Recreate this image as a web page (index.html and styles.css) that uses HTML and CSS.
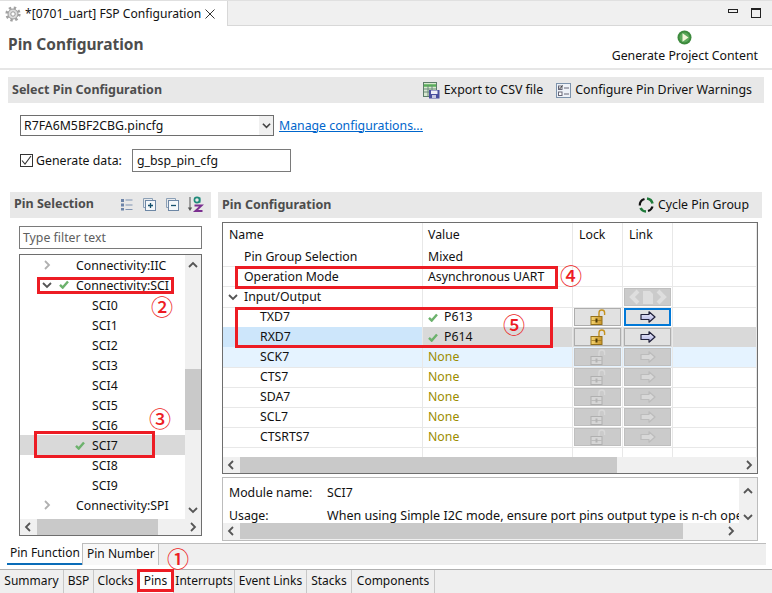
FILE: index.html
```html
<!DOCTYPE html>
<html lang="en">
<head>
<meta charset="utf-8">
<title>FSP Configuration</title>
<link rel="stylesheet" href="styles.css">
</head>
<body>
<svg class="defs" width="0" height="0" aria-hidden="true">
  <defs>
    <linearGradient id="gold" x1="0" y1="0" x2="1" y2="0"><stop offset="0" stop-color="#f6d774"/><stop offset="1" stop-color="#c9952a"/></linearGradient>
    <linearGradient id="lilac" x1="0" y1="0" x2="0" y2="1"><stop offset="0" stop-color="#eeeefa"/><stop offset="1" stop-color="#aeb0e2"/></linearGradient>
    <symbol id="lock" viewBox="0 0 16 16">
      <path d="M9 8V3.800a2.800 2.800 0 0 1 5.600 0V6" fill="none" stroke="var(--sh,#c6921f)" stroke-width="1.400"/>
      <rect x="1" y="7.500" width="11" height="8" fill="var(--lk,url(#gold))" stroke="var(--lkb,#94701a)"/>
      <path d="M1.500 11.500h10" stroke="var(--lkb,#94701a)" stroke-width=".7"/>
      <rect x="5.500" y="9.500" width="2" height="4" fill="var(--lkh,#4e3b08)"/>
    </symbol>
    <symbol id="arrow" viewBox="0 0 16 12">
      <path d="M1 3.500h8V.8L15 6l-6 5.200V8.500H1z" fill="var(--ar,url(#lilac))" stroke="var(--arb,#20203a)" stroke-width="1.200" stroke-linejoin="round"/>
    </symbol>
    <symbol id="tick" viewBox="0 0 10 9">
      <path d="M1 4.800 3.700 7.600 9 1.500" fill="none" stroke="#6cb26c" stroke-width="2.400"/>
    </symbol>
    <symbol id="chev-r" viewBox="0 0 10 10"><path d="M3 1l4 4-4 4" fill="none" stroke="currentColor" stroke-width="1.800"/></symbol>
    <symbol id="chev-l" viewBox="0 0 10 10"><path d="M7 1L3 5l4 4" fill="none" stroke="currentColor" stroke-width="1.800"/></symbol>
    <symbol id="chev-d" viewBox="0 0 10 10"><path d="M1 3l4 4 4-4" fill="none" stroke="currentColor" stroke-width="1.800"/></symbol>
    <symbol id="chev-u" viewBox="0 0 10 10"><path d="M1 7l4-4 4 4" fill="none" stroke="currentColor" stroke-width="1.800"/></symbol>
  </defs>
</svg>

<div class="app">
  <div class="tabbar">
    <div class="editor-tab">
      <svg class="gear" width="16" height="16" viewBox="0 0 16 16"><circle cx="8" cy="8" r="6.300" fill="none" stroke="#a2a2a2" stroke-width="2.600" stroke-dasharray="2.400 2.550"/><circle cx="8" cy="8" r="5" fill="#dcdcdc" stroke="#9a9a9a"/><circle cx="8" cy="8" r="2.200" fill="#fff" stroke="#9a9a9a"/></svg>
      <span class="tab-title">*[0701_uart] FSP Configuration</span>
      <svg class="close" width="10" height="10" viewBox="0 0 10 10"><path d="M.5.500l9 9M9.500.500l-9 9" stroke="#333" stroke-width="1"/></svg>
    </div>
    <div class="win-controls">
      <span class="win-min"></span>
      <span class="win-max"></span>
    </div>
  </div>

  <header class="page-head">
    <h1 class="page-title">Pin Configuration</h1>
    <div class="generate">
      <svg width="15" height="15" viewBox="0 0 15 15"><circle cx="7.500" cy="7.500" r="7" fill="#3d8a3d"/><circle cx="7.500" cy="7.500" r="5" fill="#5aa85a"/><path d="M5.500 3.200l6 4.300-6 4.300z" fill="#f2f6d8"/></svg>
      <span>Generate Project Content</span>
    </div>
  </header>

  <section class="select-section">
    <div class="bar select-bar">
      <h2 class="bar-title">Select Pin Configuration</h2>
      <div class="bar-actions">
        <span class="action">
          <svg width="17" height="17" viewBox="0 0 17 17"><rect x=".5" y=".5" width="13" height="14" fill="#d8e8d0" stroke="#5d7d6a"/><path d="M1 3.500h12" stroke="#58b058" stroke-width="2.500"/><path d="M1 7h12M1 10h12M5 3v11M9 3v11" stroke="#6a8a7a"/><rect x="6" y="8" width="10.500" height="8.500" fill="#4a4f9e"/><rect x="8" y="8.500" width="6.500" height="3.500" fill="#f0f0f8"/><rect x="9" y="13" width="4" height="3" fill="#c8c8e0"/></svg>
          Export to CSV file
        </span>
        <span class="action">
          <svg width="15" height="15" viewBox="0 0 15 15"><rect x=".5" y=".5" width="14" height="14" fill="#eef2f8" stroke="#7d93ac"/><rect x="2.500" y="3" width="3.500" height="3.500" fill="#fff" stroke="#667"/><path d="M3 4.500l1 1.200L6.500 2.500" fill="none" stroke="#333"/><rect x="2.500" y="9" width="3.500" height="3.500" fill="#fff" stroke="#667"/><path d="M8 5h5M8 11h5" stroke="#667"/></svg>
          Configure Pin Driver Warnings
        </span>
      </div>
    </div>
    <div class="combo-row">
      <div class="combo">
        <span class="combo-text">R7FA6M5BF2CBG.pincfg</span>
        <span class="combo-btn"><svg width="9" height="9"><use href="#chev-d"/></svg></span>
      </div>
      <a class="link" href="#">Manage configurations...</a>
    </div>
    <div class="gen-row">
      <span class="check"><svg width="11" height="11" viewBox="0 0 11 11"><path d="M1 5.500l3 3.500 6-8" fill="none" stroke="#333" stroke-width="1.100"/></svg></span>
      <label class="gen-label">Generate data:</label>
      <div class="text-input">g_bsp_pin_cfg</div>
    </div>
  </section>

  <div class="columns">
    <section class="left">
      <div class="bar left-bar">
        <h2 class="bar-title">Pin Selection</h2>
        <div class="tools">
          <svg width="13" height="13" viewBox="0 0 13 13"><path d="M1 1h3v3H1zM1 5.500h3v3H1zM1 10h3v2.500H1z" fill="#6d84a8"/><path d="M5.500 2h7M5.500 7h7M5.500 11.500h7" stroke="#7f93b2"/></svg>
          <svg width="13" height="13" viewBox="0 0 13 13"><path d="M.5.500h9v2M.5.500v9h2" fill="#e8eef4" stroke="#8ca0b6"/><rect x="2.500" y="2.500" width="10" height="10" fill="#f4f7fa" stroke="#6d87a5"/><path d="M5 7.500h5M7.500 5v5" stroke="#14506e" stroke-width="1.300"/></svg>
          <svg width="13" height="13" viewBox="0 0 13 13"><path d="M.5.500h9v2M.5.500v9h2" fill="#e8eef4" stroke="#8ca0b6"/><rect x="2.500" y="2.500" width="10" height="10" fill="#f4f7fa" stroke="#6d87a5"/><path d="M5 7.500h5" stroke="#14506e" stroke-width="1.300"/></svg>
          <span class="sort">
            <svg width="17" height="17" viewBox="0 0 17 17"><path d="M3 1v12" stroke="#555" stroke-width="1"/><path d="M.8 11.500L3 15l2.200-3.500z" fill="#555"/><circle cx="10" cy="4" r="2.600" fill="none" stroke="#1f8a7a" stroke-width="1.600"/><path d="M12.700 1.500v5.200" stroke="#1f8a7a" stroke-width="1.600"/><path d="M7.500 9.500h7l-6 5.500h7" fill="none" stroke="#7b2f90" stroke-width="2"/></svg>
          </span>
        </div>
      </div>
      <div class="filter">Type filter text</div>
      <div class="tree-box">
        <div class="tree-body">
          <ul class="tree">
            <li class="node"><svg class="twist twist-c" width="10" height="10"><use href="#chev-r"/></svg><span class="lbl">Connectivity:IIC</span></li>
            <li class="node"><svg class="twist twist-o" width="10" height="10"><use href="#chev-d"/></svg><svg class="tick" width="10" height="9"><use href="#tick"/></svg><span class="lbl">Connectivity:SCI</span></li>
            <li class="leaf"><span class="lbl">SCI0</span></li>
            <li class="leaf"><span class="lbl">SCI1</span></li>
            <li class="leaf"><span class="lbl">SCI2</span></li>
            <li class="leaf"><span class="lbl">SCI3</span></li>
            <li class="leaf"><span class="lbl">SCI4</span></li>
            <li class="leaf"><span class="lbl">SCI5</span></li>
            <li class="leaf"><span class="lbl">SCI6</span></li>
            <li class="leaf selected"><svg class="tick" width="10" height="9"><use href="#tick"/></svg><span class="lbl">SCI7</span></li>
            <li class="leaf"><span class="lbl">SCI8</span></li>
            <li class="leaf"><span class="lbl">SCI9</span></li>
            <li class="node"><svg class="twist twist-c" width="10" height="10"><use href="#chev-r"/></svg><span class="lbl">Connectivity:SPI</span></li>
          </ul>
          <div class="vscroll tree-v">
            <svg width="10" height="10"><use href="#chev-u"/></svg>
            <div class="v-track"><div class="v-thumb tree-thumb"></div></div>
            <svg width="10" height="10"><use href="#chev-d"/></svg>
          </div>
        </div>
        <div class="hscroll tree-h">
          <svg width="10" height="10"><use href="#chev-l"/></svg>
          <div class="h-track"><div class="h-thumb tree-hthumb"></div></div>
          <svg width="10" height="10"><use href="#chev-r"/></svg>
        </div>
      </div>
    </section>

    <section class="right">
      <div class="bar right-bar">
        <h2 class="bar-title">Pin Configuration</h2>
        <span class="action">
          <svg width="16" height="16" viewBox="0 0 16 16"><path d="M9 1.500a6.500 6.500 0 0 1 5.500 5" fill="none" stroke="#1f7a3a" stroke-width="2.600"/><path d="M14.500 9.500A6.500 6.500 0 0 1 10 14" fill="none" stroke="#111" stroke-width="2.200"/><path d="M8 14.500a6.500 6.500 0 0 1-5.500-3.500" fill="none" stroke="#1f7a3a" stroke-width="2.600"/><path d="M1.800 8.500A6.500 6.500 0 0 1 6.500 2" fill="none" stroke="#111" stroke-width="2.200"/></svg>
          Cycle Pin Group
        </span>
      </div>
      <div class="table-box">
        <div class="grid-table">
          <div class="tr head"><div class="td">Name</div><div class="td">Value</div><div class="td">Lock</div><div class="td">Link</div><div class="td"></div></div>

          <div class="tr low"><div class="td ind1">Pin Group Selection</div><div class="td">Mixed</div><div class="td"></div><div class="td"></div><div class="td"></div></div>
          <div class="tr low"><div class="td ind1">Operation Mode</div><div class="td">Asynchronous UART</div><div class="td"></div><div class="td"></div><div class="td"></div></div>
          <div class="tr"><div class="td tw"><svg class="twist-o" width="10" height="10"><use href="#chev-d"/></svg><span>Input/Output</span></div><div class="td"></div><div class="td"></div>
            <div class="td btn-cell"><span class="btn off multi"><svg width="40" height="16" viewBox="0 0 40 16"><path d="M10 2L4 8l6 6M30 2l6 6-6 6" fill="none" stroke="#dedede" stroke-width="4"/><path d="M15 2h7l3 3v10H15z" fill="#dedede"/></svg></span></div><div class="td"></div></div>

          <div class="tr"><div class="td ind2">TXD7</div><div class="td val"><svg width="10" height="9"><use href="#tick"/></svg><span>P613</span></div>
            <div class="td btn-cell"><span class="btn lock"><svg width="16" height="16"><use href="#lock"/></svg></span></div>
            <div class="td btn-cell"><span class="btn link-on focus"><svg width="16" height="12"><use href="#arrow"/></svg></span></div><div class="td"></div></div>

          <div class="tr sel"><div class="td ind2">RXD7</div><div class="td val"><svg width="10" height="9"><use href="#tick"/></svg><span>P614</span></div>
            <div class="td btn-cell"><span class="btn lock"><svg width="16" height="16"><use href="#lock"/></svg></span></div>
            <div class="td btn-cell"><span class="btn link-on"><svg width="16" height="12"><use href="#arrow"/></svg></span></div><div class="td"></div></div>

          <div class="tr hov"><div class="td ind2">SCK7</div><div class="td none">None</div>
            <div class="td btn-cell"><span class="btn off lock-off"><svg width="16" height="16"><use href="#lock"/></svg></span></div>
            <div class="td btn-cell"><span class="btn off arrow-off"><svg width="16" height="12"><use href="#arrow"/></svg></span></div><div class="td"></div></div>
          <div class="tr"><div class="td ind2">CTS7</div><div class="td none">None</div>
            <div class="td btn-cell"><span class="btn off lock-off"><svg width="16" height="16"><use href="#lock"/></svg></span></div>
            <div class="td btn-cell"><span class="btn off arrow-off"><svg width="16" height="12"><use href="#arrow"/></svg></span></div><div class="td"></div></div>
          <div class="tr"><div class="td ind2">SDA7</div><div class="td none">None</div>
            <div class="td btn-cell"><span class="btn off lock-off"><svg width="16" height="16"><use href="#lock"/></svg></span></div>
            <div class="td btn-cell"><span class="btn off arrow-off"><svg width="16" height="12"><use href="#arrow"/></svg></span></div><div class="td"></div></div>
          <div class="tr"><div class="td ind2">SCL7</div><div class="td none">None</div>
            <div class="td btn-cell"><span class="btn off lock-off"><svg width="16" height="16"><use href="#lock"/></svg></span></div>
            <div class="td btn-cell"><span class="btn off arrow-off"><svg width="16" height="12"><use href="#arrow"/></svg></span></div><div class="td"></div></div>
          <div class="tr"><div class="td ind2">CTSRTS7</div><div class="td none">None</div>
            <div class="td btn-cell"><span class="btn off lock-off"><svg width="16" height="16"><use href="#lock"/></svg></span></div>
            <div class="td btn-cell"><span class="btn off arrow-off"><svg width="16" height="12"><use href="#arrow"/></svg></span></div><div class="td"></div></div>
          <div class="tr stub"><div class="td"></div><div class="td"></div><div class="td"></div><div class="td"></div><div class="td"></div></div>
        </div>
        <div class="hscroll table-h">
          <svg width="10" height="10"><use href="#chev-l"/></svg>
          <div class="h-track"><div class="h-thumb table-thumb"></div></div>
          <svg width="10" height="10"><use href="#chev-r"/></svg>
        </div>
      </div>
      <div class="detail">
        <div class="detail-main">
          <div class="detail-text">
            <div class="detail-row first"><span class="dk">Module name:</span><span class="dv">SCI7</span></div>
            <div class="detail-row usage"><span class="dk">Usage:</span><span class="dv">When using Simple I2C mode, ensure port pins output type is n-ch open drain</span></div>
          </div>
          <div class="hscroll detail-h">
            <svg width="10" height="10"><use href="#chev-l"/></svg>
            <div class="h-track"><div class="h-thumb detail-thumb"></div></div>
            <svg width="10" height="10"><use href="#chev-r"/></svg>
          </div>
        </div>
        <div class="vscroll detail-v">
          <svg width="10" height="10"><use href="#chev-u"/></svg>
          <svg width="10" height="10"><use href="#chev-d"/></svg>
        </div>
      </div>
    </section>
  </div>

  <div class="sub-tabs">
    <div class="sub-tab current">Pin Function</div>
    <div class="sub-tab">Pin Number</div>
    <div class="sub-rest"></div>
  </div>

  <nav class="main-tabs">
    <span class="mt">Summary</span><span class="mt">BSP</span><span class="mt">Clocks</span><span class="mt active">Pins</span><span class="mt">Interrupts</span><span class="mt">Event Links</span><span class="mt">Stacks</span><span class="mt">Components</span>
  </nav>

  <div class="rbox rb1"></div>
  <div class="rbox rb2"></div>
  <div class="rbox rb3"></div>
  <div class="rbox rb4"></div>
  <div class="rbox rb5"></div>
  <span class="num n1">①</span>
  <span class="num n2">②</span>
  <span class="num n3">③</span>
  <span class="num n4">④</span>
  <span class="num n5">⑤</span>
</div>
</body>
</html>
```
FILE: styles.css
```css
* { box-sizing: border-box; }
html, body { margin: 0; padding: 0; background: #fff; }
body { font: 12.3px/20px "Noto Sans", "Open Sans", sans-serif; color: #111; }
h1, h2 { margin: 0; }
ul { list-style: none; margin: 0; padding: 0; }
svg { display: block; flex: none; }
.defs { position: absolute; }

.app { position: relative; width: 772px; height: 593px; overflow: hidden; display: flex; flex-direction: column; }

/* top editor tab */
.tabbar { height: 26px; flex: none; display: flex; justify-content: space-between; background: #f0f0f0; border-top: 1px solid #e0e0e0; border-bottom: 1px solid #d8d8d8; }
.editor-tab { width: 228px; height: 25px; background: #fff; border-right: 1px solid #d8d8d8; display: flex; align-items: center; padding-left: 5px; margin-bottom: -1px; }
.gear { margin-right: 4px; }
.tab-title { white-space: nowrap; width: 180px; font-size: 12.1px; }
.close { margin-left: 0; }
.win-controls { display: flex; align-items: flex-start; padding: 7px 11px 0 0; gap: 13px; }
.win-min { width: 10px; height: 4px; border: 1px solid #222; margin-top: 1px; }
.win-max { width: 10px; height: 10px; border: 1px solid #222; border-top-width: 2px; }

/* page head */
.page-head { height: 44px; flex: none; display: flex; justify-content: space-between; border-bottom: 2px solid #e6e6e6; padding: 0 14px 0 8px; }
.page-title { font-size: 15.5px; font-weight: 700; color: #4d4d4d; line-height: 20px; margin-top: 8px; }
.generate { display: flex; flex-direction: column; align-items: center; padding-top: 4px; }
.generate span { line-height: 18px; margin-top: 2px; white-space: nowrap; }

/* section bars */
.bar { background: #e8e8e8; display: flex; align-items: center; justify-content: space-between; height: 26px; }
.bar-title { font-size: 12.5px; font-weight: 700; color: #4d4d4d; }
.action { display: flex; align-items: center; gap: 4px; white-space: nowrap; }
.bar-actions { display: flex; gap: 13px; font-size: 12.4px; }

.select-section { height: 122px; flex: none; padding: 7px 8px 0; }
.select-bar { padding: 0 12px 0 4px; }
.combo-row { display: flex; align-items: center; gap: 5px; margin: 12px 0 0 12px; }
.combo { width: 254px; height: 21px; border: 1px solid #6e6e6e; display: flex; align-items: center; justify-content: space-between; padding-left: 3px; }
.combo-btn { width: 14px; height: 19px; background: #f0f0f0; display: flex; align-items: center; justify-content: center; color: #444; }
.link { color: #0066cc; text-decoration: underline; }
.gen-row { display: flex; align-items: center; margin: 13px 0 0 12px; }
.check { width: 13px; height: 13px; border: 1px solid #333; display: flex; align-items: center; justify-content: center; }
.gen-label { margin-left: 3px; width: 96px; }
.text-input { width: 159px; height: 23px; border: 1px solid #7a7a7a; padding-left: 4px; line-height: 21px; }

/* columns */
.columns { height: 350px; flex: none; display: flex; padding-left: 10px; }
.left { width: 201px; flex: none; display: flex; flex-direction: column; }
.left-bar { padding: 0 7px 2px 4px; }
.tools { display: flex; align-items: center; gap: 10px; }
.sort { margin-left: -2px; }
.filter { margin: 8px 0 0 9px; width: 183px; height: 23px; border: 1px solid #7a7a7a; padding-left: 3px; line-height: 21px; color: #5e5e5e; }
.tree-box { margin: 5px 0 0 9px; width: 183px; height: 282px; border: 1px solid #6e6e6e; display: flex; flex-direction: column; }
.tree-body { flex: 1; display: flex; min-height: 0; }
.tree { width: 165px; flex: none; }
.node, .leaf { height: 20px; position: relative; display: flex; align-items: center; padding-top: 2px; }
.leaf { padding-top: 1px; }
.node .lbl { margin-left: 56px; }
.leaf .lbl { margin-left: 72px; }
.node .twist { position: absolute; left: 22px; top: 5px; }
.twist-c { color: #b0b0b0; }
.twist-o { color: #555; }
.node .tick { position: absolute; left: 39px; top: 5px; }
.leaf .tick { position: absolute; left: 55px; top: 6px; }
.selected { background: #d9d9d9; }
.vscroll { display: flex; flex-direction: column; align-items: center; justify-content: space-between; color: #555; }
.tree-v { width: 16px; background: #f0f0f0; padding: 5px 0 4px; }
.v-track { flex: 1; width: 16px; padding-top: 99px; }
.v-thumb { background: #c9c9c9; height: 61px; width: 16px; }
.hscroll { display: flex; align-items: center; justify-content: space-between; background: #f0f0f0; height: 16px; color: #555; padding: 0 3px; }
.h-track { flex: 1; height: 16px; }
.h-thumb { height: 16px; background: #c9c9c9; }
.tree-h { flex: none; }
.tree-hthumb { width: 121px; margin-left: 4px; }

/* right */
.right { flex: none; width: 544px; margin-left: 7px; display: flex; flex-direction: column; }
.right-bar { padding: 0 13px 0 4px; }
.table-box { margin: 4px 0 0 4px; width: 536px; height: 252px; border: 1px solid #6e6e6e; display: flex; flex-direction: column; }
.grid-table { height: 234px; overflow: hidden; }
.tr { display: grid; grid-template-columns: 200px 150px 50px 50px 84px; height: 20px; }
.tr .td { border-right: 1px solid #e8e8e8; border-bottom: 1px solid #e8e8e8; padding: 0 0 0 6px; line-height: 18px; white-space: nowrap; display: flex; align-items: center; }
.tr.low .td { padding-top: 1px; }
.tr .td:nth-child(2) { padding-left: 5px; }
.tr.head { height: 24px; }
.tr.head .td { border-bottom: 0; align-items: flex-start; padding-top: 2px; line-height: 20px; }
.tr.stub { height: 10px; }
.tr.stub .td { border-bottom: 0; }
.tr .ind1 { padding-left: 21px; }
.tr .ind2 { padding-left: 37px; }
.tr .tw { padding-left: 5px; gap: 6px; }
.tr .btn-cell { padding: 1px; }
.btn { width: 47px; height: 18px; background: #e1e1e1; border: 1px solid #adadad; display: flex; align-items: center; justify-content: center; }
.off { background: #cbcbcb; border-color: #bfbfbf; --lk: #d6d6d6; --lkb: #b0b0b0; --lkh: #b4b4b4; --sh: #d8d8d8; --ar: #d8d8d8; --arb: #bcbcbc; }
.focus { border: 2px solid #0078d7; }
.val { gap: 6px; }
.sel .td { background: #d9d9d9; }
.sel .td:first-child { background: #cde6fb; }
.hov .td { background: #e5f3ff; }
.none { color: #9c8c00; }
.table-h { flex: none; }
.table-thumb { width: 377px; margin-left: 4px; }

.detail { margin: 3px 0 0 4px; width: 536px; height: 64px; border: 1px solid #bcbcbc; display: flex; background: #f0f0f0; padding: 0 1px 1px 0; }
.detail-main { flex: 1; min-width: 0; display: flex; flex-direction: column; }
.detail-text { flex: 1; background: #fff; overflow: hidden; padding: 0 0 0 6px; }
.detail-row { display: flex; white-space: nowrap; height: 23px; line-height: 22px; }
.detail-row.first { margin-top: 4px; }
.usage .dv { font-size: 12.55px; }
.dk { width: 98px; flex: none; }
.detail-h { flex: none; }
.detail-thumb { width: 443px; margin-left: 4px; }
.detail-v { width: 17px; flex: none; padding: 8px 0 16px; justify-content: flex-start; gap: 16px; }

/* bottom tabs */
.sub-tabs { margin-top: 1px; height: 26px; flex: none; display: flex; padding-left: 7px; }
.sub-tab { height: 22px; line-height: 20px; white-space: nowrap; flex: none; font-size: 12px; }
.sub-tab.current { width: 75px; padding-left: 3px; border-bottom: 2px solid #0a6cb8; }
.sub-tab + .sub-tab { width: 77px; border: 1px solid #bdbdbd; border-bottom: 0; padding-left: 4px; background: #f8f8f8; }
.sub-rest { width: 607px; height: 22px; background: #efefef; border-top: 1px solid #bdbdbd; }
.main-tabs { flex: 1; display: grid; grid-template-columns: 64px 30px 44px 36px 61px 72px 45px 83px 1fr; background: #efefef; border-top: 1px solid #b0b0b0; }
.mt { text-align: center; border-right: 1px solid #c8c8c8; line-height: 22px; white-space: nowrap; font-size: 12px; }
.mt.active { background: #fff; }

/* annotations over the screenshot */
.rbox { position: absolute; border: 3px solid #ed1c24; }
.rb1 { left: 137px; top: 569px; width: 37px; height: 23px; }
.rb2 { left: 37px; top: 277px; width: 137px; height: 17px; }
.rb3 { left: 34px; top: 431px; width: 121px; height: 27px; }
.rb4 { left: 235px; top: 266px; width: 323px; height: 23px; }
.rb5 { left: 235px; top: 307px; width: 318px; height: 41px; }
.num { position: absolute; font: 500 22px/20px "Noto Sans CJK SC", sans-serif; color: #ed1c24; }
.n1 { left: 167px; top: 547px; }
.n2 { left: 151px; top: 295px; }
.n3 { left: 149px; top: 407px; }
.n4 { left: 560px; top: 264px; }
.n5 { left: 503px; top: 313px; }
```
